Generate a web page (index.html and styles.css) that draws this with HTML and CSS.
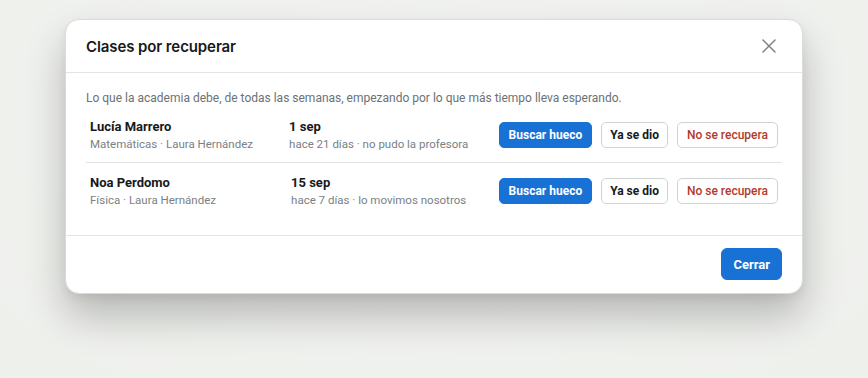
FILE: index.html
```html
<!DOCTYPE html>
<html lang="es">
<head>
    <meta charset="UTF-8">
    <meta name="viewport" content="width=device-width, initial-scale=1.0">
    <title>Clases por recuperar</title>
    <link rel="stylesheet" href="styles.css">
</head>
<body>
    <div class="modal">
        <div class="modal-header">
            <h2>Clases por recuperar</h2>
            <button class="close" aria-label="Cerrar">
                <svg width="14" height="14" viewBox="0 0 14 14" fill="none" stroke="currentColor" stroke-width="1.5" stroke-linecap="round">
                    <path d="M1 1 L13 13 M13 1 L1 13"/>
                </svg>
            </button>
        </div>
        <div class="modal-body">
            <p class="intro">Lo que la academia debe, de todas las semanas, empezando por lo que más tiempo lleva esperando.</p>
            <div class="row">
                <div class="who">
                    <div class="name">Lucía Marrero</div>
                    <div class="meta">Matemáticas · Laura Hernández</div>
                </div>
                <div class="when">
                    <div class="date">1 sep</div>
                    <div class="meta">hace 21 días · no pudo la profesora</div>
                </div>
                <div class="actions">
                    <button class="btn primary">Buscar hueco</button>
                    <button class="btn">Ya se dio</button>
                    <button class="btn danger">No se recupera</button>
                </div>
            </div>
            <div class="row">
                <div class="who">
                    <div class="name">Noa Perdomo</div>
                    <div class="meta">Física · Laura Hernández</div>
                </div>
                <div class="when">
                    <div class="date">15 sep</div>
                    <div class="meta">hace 7 días · lo movimos nosotros</div>
                </div>
                <div class="actions">
                    <button class="btn primary">Buscar hueco</button>
                    <button class="btn">Ya se dio</button>
                    <button class="btn danger">No se recupera</button>
                </div>
            </div>
        </div>
        <div class="modal-footer">
            <button class="btn primary big">Cerrar</button>
        </div>
    </div>
</body>
</html>
```

FILE: styles.css
```css
body {
    margin: 0;
    height: 100vh;
    font-family: 'Roboto', 'Noto Sans', sans-serif;
    color: #1c1f22;
    background: radial-gradient(ellipse at 50% 30%, #f3f4f2 0%, #eef0ec 100%);
    padding-top: 19px;
    box-sizing: border-box;
}
.modal {
    width: 738px;
    margin-left: 65px;
    background: #fff;
    border: 1px solid #d9dcd8;
    border-radius: 14px;
    box-shadow: 0 22px 40px rgba(0, 0, 0, 0.24), 0 4px 10px rgba(0, 0, 0, 0.06);
    box-sizing: border-box;
}
.modal-header {
    height: 53px;
    padding: 0 20px;
    display: flex;
    align-items: center;
    justify-content: space-between;
    border-bottom: 1px solid #e1e4e2;
    box-sizing: border-box;
}
.modal-header h2 {
    margin: 0;
    font-family: 'Inter', sans-serif;
    font-size: 15px;
    font-weight: 600;
    color: #16191c;
    letter-spacing: -0.1px;
}
.close {
    background: none;
    border: none;
    padding: 0;
    color: #7d848b;
    display: flex;
    margin-right: 6px;
}
.modal-body {
    padding: 17px 20px 17px;
    border-bottom: 1px solid #e1e4e2;
}
.intro {
    margin: 0 0 1px;
    font-size: 12px;
    line-height: 16px;
    color: #6c7177;
}
.row {
    display: grid;
    grid-template-columns: 1fr 208px auto;
    gap: 16px;
    align-items: center;
    padding: 11px 4px 10px;
    white-space: nowrap;
}
.row + .row {
    border-top: 1px solid #e1e4e2;
}
.when {
    justify-self: center;
}
.name, .date {
    font-size: 13px;
    font-weight: 700;
    line-height: 18px;
    color: #16191c;
}
.meta {
    font-size: 11.5px;
    line-height: 16px;
    color: #7a7f85;
}
.actions {
    display: flex;
    gap: 9px;
}
.btn {
    font-family: 'Roboto', 'Noto Sans', sans-serif;
    font-size: 12px;
    font-weight: 700;
    height: 26px;
    padding: 0 8px;
    border: 1px solid #cfd4d3;
    border-radius: 5px;
    background: #fff;
    color: #16191c;
}
.btn.primary {
    background: #1872d5;
    border-color: #1872d5;
    color: #fff;
    padding: 0 9px;
}
.btn.danger {
    color: #b13a2c;
    font-weight: 500;
    padding: 0 9px;
}
.modal-footer {
    display: flex;
    justify-content: flex-end;
    padding: 12px 20px 13px;
}
.btn.big {
    height: 32px;
    padding: 0 11px;
    font-size: 13px;
    border-radius: 6px;
}
```
